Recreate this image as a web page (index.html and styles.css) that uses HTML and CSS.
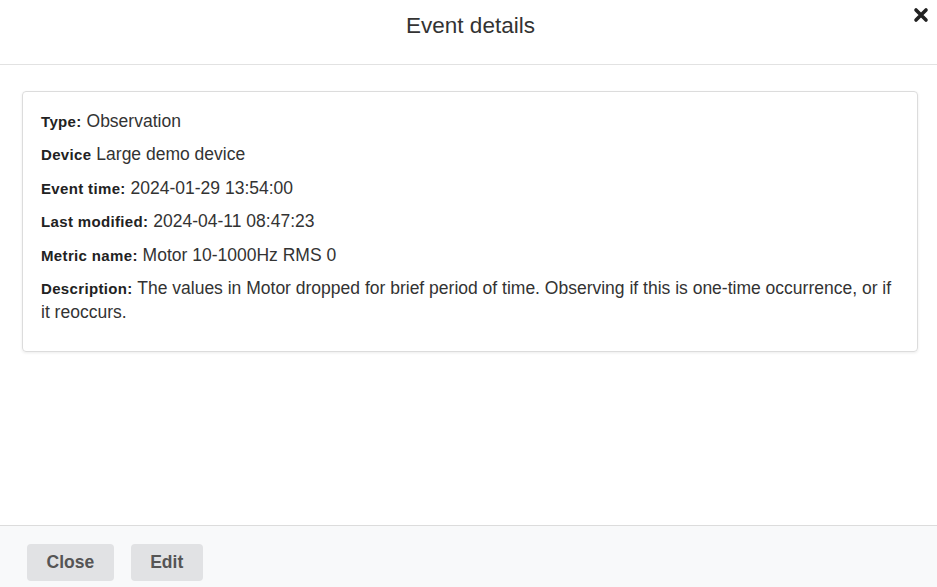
FILE: index.html
```html
<!DOCTYPE html>
<html lang="en">
<head>
  <meta charset="UTF-8">
  <meta name="viewport" content="width=device-width, initial-scale=1.0">
  <title>Event details</title>
  <link rel="stylesheet" href="styles.css">
</head>
<body>
  <div class="modal">
    <div class="modal-header">
      <h1>Event details</h1>
      <button class="close-x" type="button" aria-label="Close">
        <svg width="16" height="16" viewBox="0 0 16 16">
          <path d="M3 3 L13 13 M13 3 L3 13" stroke="#222" stroke-width="3.6" stroke-linecap="round"/>
        </svg>
      </button>
    </div>
    <div class="modal-body">
      <div class="card">
        <p><b>Type:</b> Observation</p>
        <p><b>Device</b> Large demo device</p>
        <p><b>Event time:</b> 2024-01-29 13:54:00</p>
        <p><b>Last modified:</b> 2024-04-11 08:47:23</p>
        <p><b>Metric name:</b> Motor 10-1000Hz RMS 0</p>
        <p><b>Description:</b> The values in Motor dropped for brief period of time. Observing if this is one-time occurrence, or if it reoccurs.</p>
      </div>
    </div>
    <div class="modal-footer">
      <button type="button" class="btn">Close</button>
      <button type="button" class="btn">Edit</button>
    </div>
  </div>
</body>
</html>
```
FILE: styles.css
```css
* {
  margin: 0;
  padding: 0;
  box-sizing: border-box;
}

body {
  font-family: "Liberation Sans", Arial, sans-serif;
  background-color: #ffffff;
  color: #333;
  width: 937px;
  height: 587px;
  overflow: hidden;
}

.modal {
  display: flex;
  flex-direction: column;
  height: 587px;
}

.modal-header {
  position: relative;
  height: 65px;
  border-bottom: 1px solid #e2e2e2;
  display: flex;
  justify-content: center;
  align-items: center;
}

.modal-header h1 {
  font-size: 22.5px;
  font-weight: normal;
  color: #333;
  margin-top: -13px;
  margin-left: 4px;
}

.close-x {
  position: absolute;
  top: 7px;
  right: 8px;
  border: none;
  background: none;
  width: 16px;
  height: 16px;
  cursor: pointer;
}

.modal-body {
  flex: 1;
  padding: 26px 19px 0 22px;
}

.card {
  border: 1px solid #dcdcdc;
  border-radius: 4px;
  box-shadow: 0 1px 3px rgba(0, 0, 0, 0.08);
  padding: 17px 18px 27px 18px;
}

.card p {
  font-size: 17.5px;
  line-height: 24px;
  margin-bottom: 9.4px;
  color: #333;
}

.card p:last-child {
  margin-bottom: 0;
}

.card b {
  font-size: 15px;
  line-height: 1;
  letter-spacing: 0.35px;
  color: #222;
}

.modal-footer {
  height: 62px;
  border-top: 1px solid #dcdcdc;
  background-color: #f8f9fa;
  display: flex;
  align-items: flex-start;
  gap: 17px;
  padding: 18px 27px 0;
}

.btn {
  height: 37px;
  padding: 0 19.5px;
  border: none;
  border-radius: 4px;
  background-color: #e1e2e4;
  color: #555;
  font-family: "Liberation Sans", Arial, sans-serif;
  font-size: 17.5px;
  font-weight: bold;
  cursor: pointer;
}
```
